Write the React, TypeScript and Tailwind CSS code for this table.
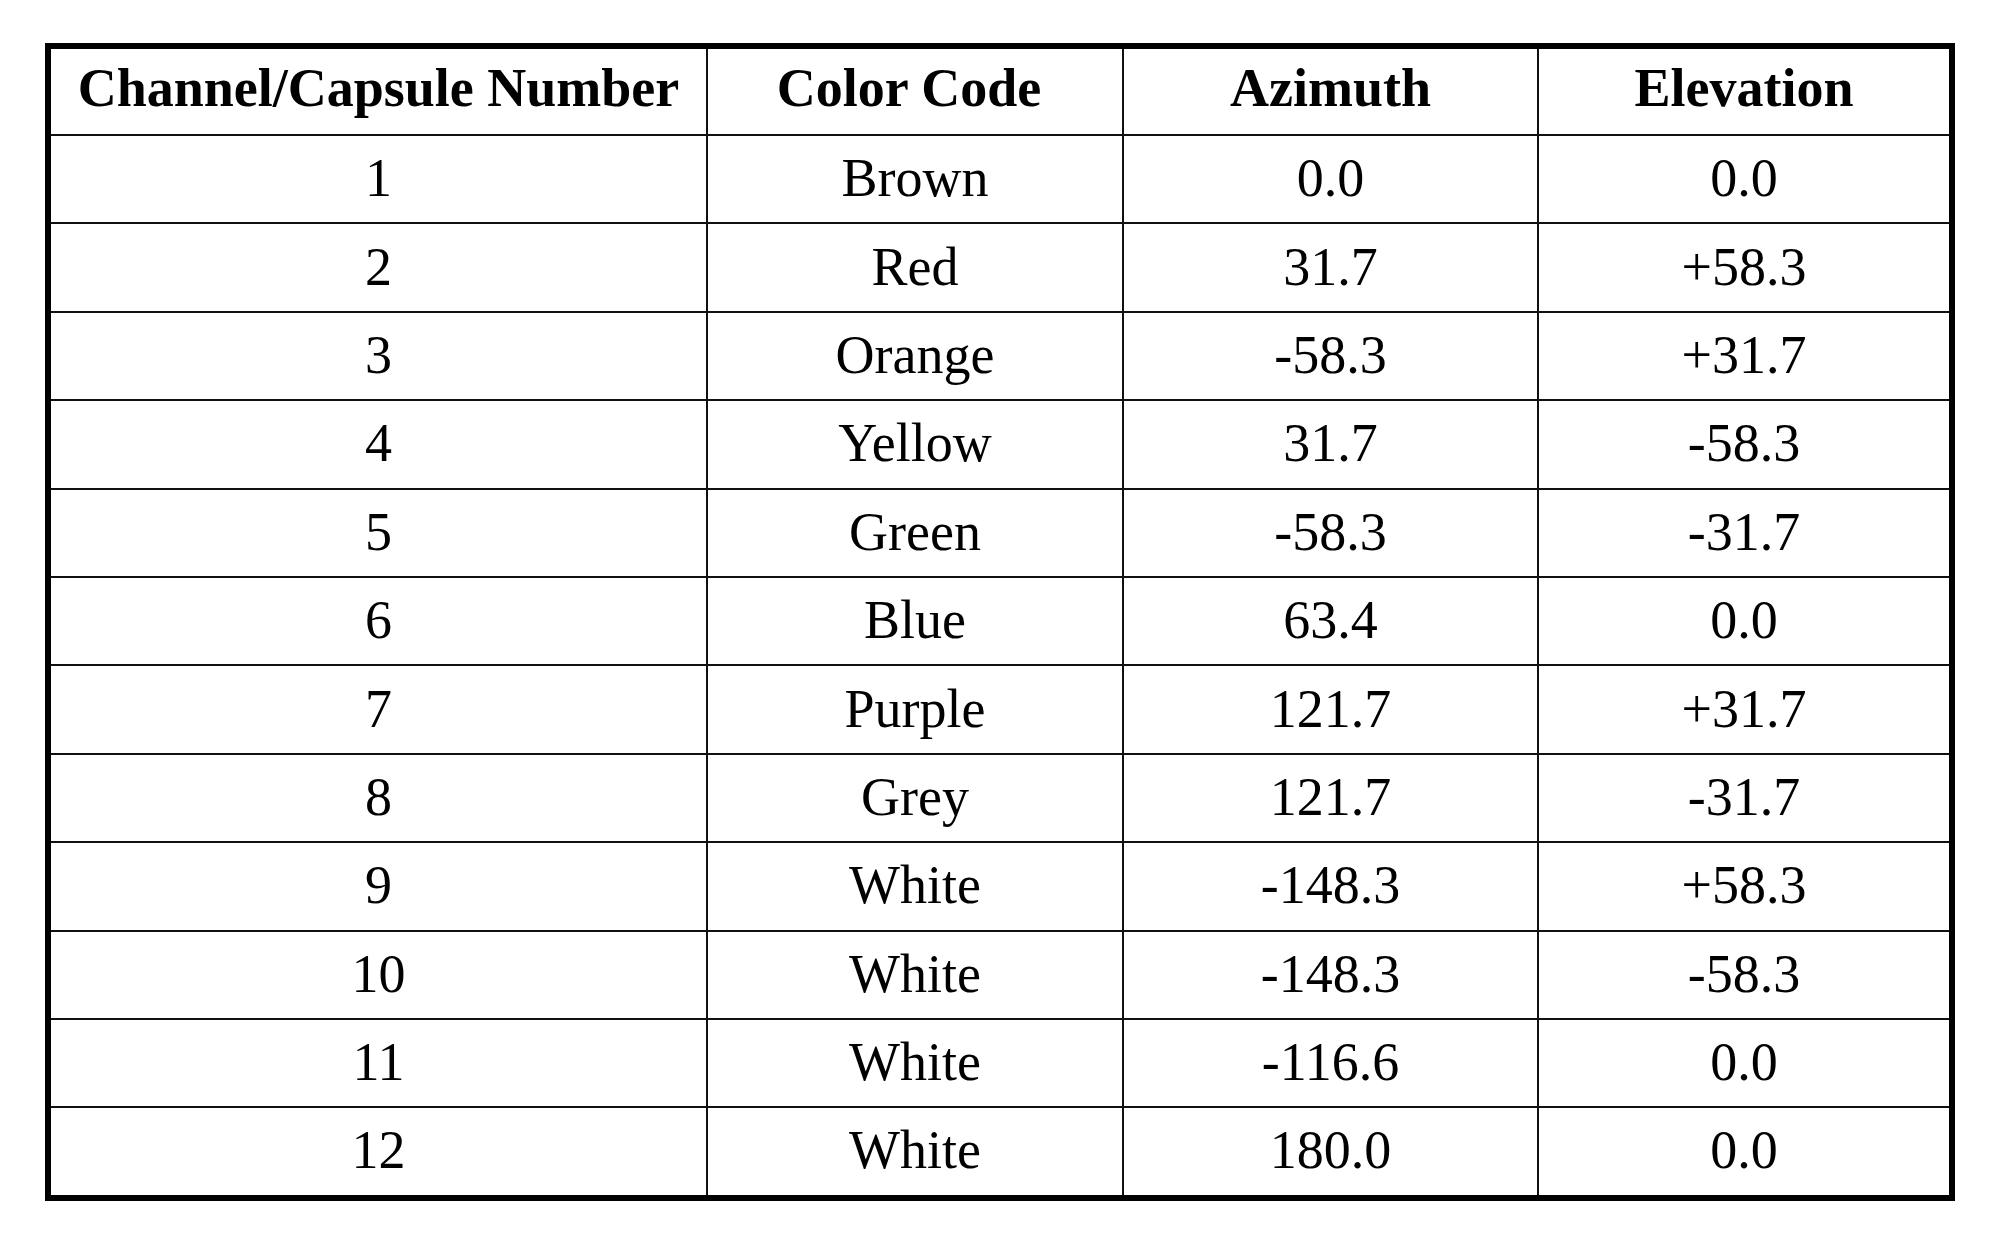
const HEADERS = ["Channel/Capsule Number", "Color Code", "Azimuth", "Elevation"];

const ROWS: [string, string, string, string][] = [
  ["1", "Brown", "0.0", "0.0"],
  ["2", "Red", "31.7", "+58.3"],
  ["3", "Orange", "-58.3", "+31.7"],
  ["4", "Yellow", "31.7", "-58.3"],
  ["5", "Green", "-58.3", "-31.7"],
  ["6", "Blue", "63.4", "0.0"],
  ["7", "Purple", "121.7", "+31.7"],
  ["8", "Grey", "121.7", "-31.7"],
  ["9", "White", "-148.3", "+58.3"],
  ["10", "White", "-148.3", "-58.3"],
  ["11", "White", "-116.6", "0.0"],
  ["12", "White", "180.0", "0.0"],
];

export default function App() {
  return (
    <div className="min-h-[1244px] w-[2000px] bg-white pl-[45px] pt-[43px] font-['Liberation_Serif','Times_New_Roman',serif] text-[54px] text-black">
      <div className="w-[1910px] border-[6px] border-black">
        {/* header */}
        <div className="grid h-[85px] grid-cols-[655px_416px_415px_412px]">
          {HEADERS.map((h, i) => (
            <div
              key={h}
              className={`flex items-center justify-center pb-[7px] font-bold leading-none ${i > 0 ? "border-l-2 border-[#111]" : ""} ${i === 1 ? "pr-[12px]" : ""}`}
            >
              {h}
            </div>
          ))}
        </div>

        {/* body rows */}
        {ROWS.map((row) => (
          <div
            key={row[0]}
            className="grid h-[88.4px] grid-cols-[655px_416px_415px_412px] border-t-2 border-[#111]"
          >
            {row.map((cell, i) => (
              <div
                key={i}
                className={`flex items-center justify-center pb-[2px] leading-none ${i > 0 ? "border-l-2 border-[#111]" : ""}`}
              >
                {cell}
              </div>
            ))}
          </div>
        ))}
      </div>
    </div>
  );
}
